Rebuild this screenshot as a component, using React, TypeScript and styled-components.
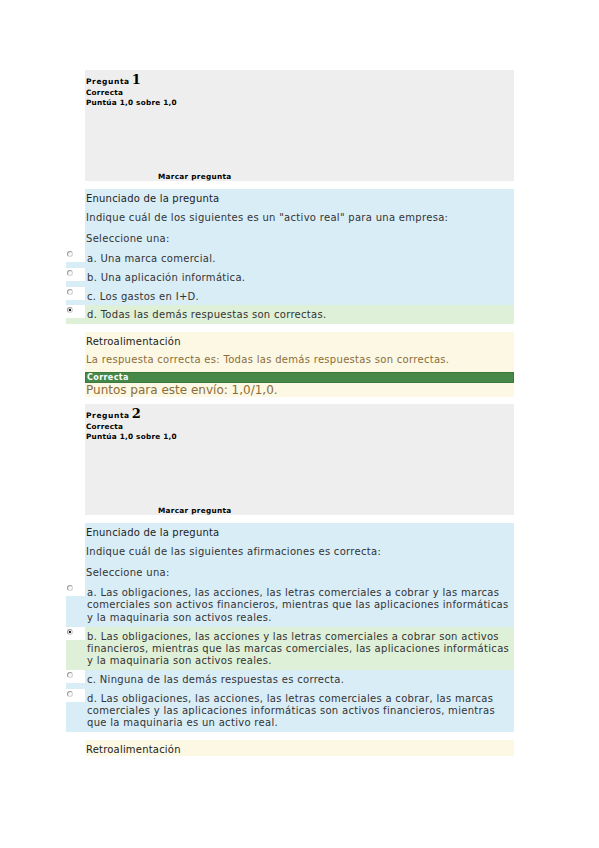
import styled, { createGlobalStyle } from 'styled-components';

const GlobalStyle = createGlobalStyle`
  body {
    margin: 0;
    background: #ffffff;
    font-family: "DejaVu Sans", Verdana, sans-serif;
    color: #333333;
  }
`;

interface Option {
  letter: string;
  text: string;
  checked?: boolean;
}

interface Question {
  number: number;
  text: string;
  options: Option[];
  rightAnswer?: string;
  showOutcome: boolean;
}

const questions: Question[] = [
  {
    number: 1,
    text: 'Indique cuál de los siguientes es un "activo real" para una empresa:',
    options: [
      { letter: 'a', text: 'Una marca comercial.' },
      { letter: 'b', text: 'Una aplicación informática.' },
      { letter: 'c', text: 'Los gastos en I+D.' },
      { letter: 'd', text: 'Todas las demás respuestas son correctas.', checked: true },
    ],
    rightAnswer: 'Todas las demás respuestas son correctas.',
    showOutcome: true,
  },
  {
    number: 2,
    text: 'Indique cuál de las siguientes afirmaciones es correcta:',
    options: [
      {
        letter: 'a',
        text: 'Las obligaciones, las acciones, las letras comerciales a cobrar y las marcas comerciales son activos financieros, mientras que las aplicaciones informáticas y la maquinaria son activos reales.',
      },
      {
        letter: 'b',
        text: 'Las obligaciones, las acciones y las letras comerciales a cobrar son activos financieros, mientras que las marcas comerciales, las aplicaciones informáticas y la maquinaria son activos reales.',
        checked: true,
      },
      { letter: 'c', text: 'Ninguna de las demás respuestas es correcta.' },
      {
        letter: 'd',
        text: 'Las obligaciones, las acciones, las letras comerciales a cobrar, las marcas comerciales y las aplicaciones informáticas son activos financieros, mientras que la maquinaria es un activo real.',
      },
    ],
    showOutcome: false,
  },
];

const App = () => {
  return (
    <>
      <GlobalStyle />
      <Page>
        {questions.map((q) => (
          <QuestionBlock key={q.number}>
            <InfoBox>
              <QNumber>
                Pregunta<NumberBig>{q.number}</NumberBig>
              </QNumber>
              <InfoLine>Correcta</InfoLine>
              <InfoLine>Puntúa 1,0 sobre 1,0</InfoLine>
              <FlagText>Marcar pregunta</FlagText>
            </InfoBox>

            <Formulation>
              <SectionTitle>Enunciado de la pregunta</SectionTitle>
              <QText>{q.text}</QText>
              <Prompt>Seleccione una:</Prompt>
              <Answers>
                {q.options.map((o) => (
                  <OptionRow key={o.letter} correct={!!o.checked}>
                    <RadioCell>
                      <Radio checked={!!o.checked} />
                    </RadioCell>
                    <OptionLabel>
                      {o.letter}. {o.text}
                    </OptionLabel>
                  </OptionRow>
                ))}
              </Answers>
            </Formulation>

            <Outcome>
              <SectionTitle>Retroalimentación</SectionTitle>
              {q.showOutcome && (
                <>
                  <RightAnswer>La respuesta correcta es: {q.rightAnswer}</RightAnswer>
                  <CorrectBar>Correcta</CorrectBar>
                  <Points>Puntos para este envío: 1,0/1,0.</Points>
                </>
              )}
            </Outcome>
          </QuestionBlock>
        ))}
      </Page>
    </>
  );
};

export default App;

const Page = styled.div`
  width: 429px;
  margin-left: 85px;
  padding-top: 70px;
  display: flex;
  flex-direction: column;
  gap: 7px;
`;

const QuestionBlock = styled.div`
  display: flex;
  flex-direction: column;
  gap: 8px;
`;

const InfoBox = styled.div`
  height: 111px;
  box-sizing: border-box;
  background: #eeeeee;
  padding: 3px 1px 0;
  display: flex;
  flex-direction: column;
  color: #000000;
`;

const QNumber = styled.div`
  font-size: 7.5px;
  font-weight: bold;
  letter-spacing: 0.6px;
  line-height: 13px;
`;

const NumberBig = styled.span`
  font-family: "DejaVu Serif", serif;
  font-size: 13px;
  margin-left: 2px;
`;

const InfoLine = styled.div`
  font-size: 7.3px;
  font-weight: bold;
  letter-spacing: 0.25px;
  line-height: 10px;
`;

const FlagText = styled.div`
  margin-top: auto;
  margin-left: 72px;
  font-size: 7.3px;
  font-weight: bold;
  letter-spacing: 0.3px;
  line-height: 9px;
`;

const Formulation = styled.div`
  background: #d9edf7;
  padding-top: 3px;
  font-size: 10px;
  letter-spacing: 0.3px;
  line-height: 13px;
  color: #333333;
`;

const SectionTitle = styled.div`
  font-size: 10px;
  letter-spacing: 0.2px;
  line-height: 13px;
  color: #222222;
  padding-left: 1px;
`;

const QText = styled.div`
  margin-top: 6px;
  padding-left: 1px;
`;

const Prompt = styled.div`
  margin-top: 8px;
  padding-left: 1px;
`;

const Answers = styled.div`
  margin-top: 4px;
  margin-left: -19px;
  display: flex;
  flex-direction: column;
`;

const OptionRow = styled.div<{ correct: boolean }>`
  display: flex;
  align-items: flex-start;
  background: ${(props) => (props.correct ? '#dff0d8' : '#d9edf7')};
`;

const RadioCell = styled.div`
  width: 19px;
  height: 13px;
  flex-shrink: 0;
  background: #ffffff;
  position: relative;
`;

const Radio = styled.span<{ checked: boolean }>`
  position: absolute;
  left: 1px;
  top: 2px;
  width: 6px;
  height: 6px;
  box-sizing: border-box;
  border-radius: 50%;
  border: 1px solid #9a9a9a;
  border-right-color: #d4d4d4;
  border-bottom-color: #d4d4d4;
  background: ${(props) =>
    props.checked
      ? 'radial-gradient(circle, #222 0, #222 1.2px, #f4f4f4 1.6px)'
      : '#f7f7f7'};
`;

const OptionLabel = styled.div`
  flex: 1;
  padding: 4px 4px 2.5px 2px;
  line-height: 12.3px;
`;

const Outcome = styled.div`
  background: #fcf8e3;
  padding-top: 3px;
  font-size: 10px;
  letter-spacing: 0.3px;
  line-height: 13px;
`;

const RightAnswer = styled.div`
  margin-top: 5px;
  padding-left: 1px;
  color: #8a6d3b;
`;

const CorrectBar = styled.div`
  margin-top: 6px;
  height: 11px;
  box-sizing: border-box;
  background: #468847;
  border: 1px solid #3d7a3e;
  color: #ffffff;
  font-size: 8px;
  font-weight: bold;
  line-height: 9px;
  padding-left: 1px;
  letter-spacing: 0.4px;
`;

const Points = styled.div`
  font-size: 12px;
  letter-spacing: 0;
  line-height: 14px;
  color: #8a6d3b;
  padding-left: 1px;
`;
